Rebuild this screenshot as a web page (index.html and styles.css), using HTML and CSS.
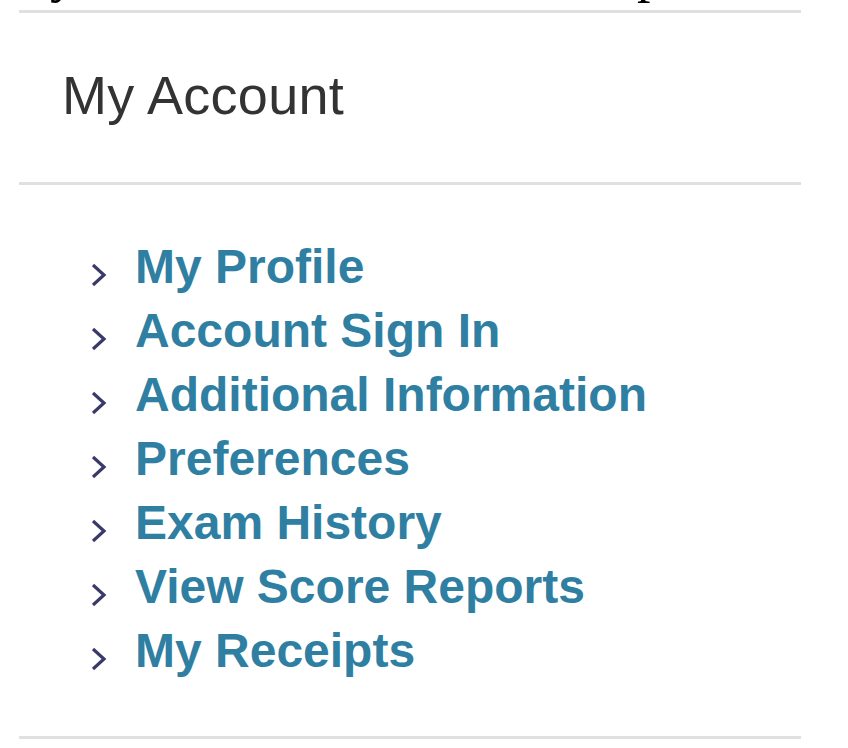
FILE: index.html
```html
<!DOCTYPE html>
<html>
<head>
<meta charset="utf-8">
<link rel="stylesheet" href="styles.css">
</head>
<body>
<div class="cut"><div class="cut-line"><span class="w1">y</span><span class="w2">p</span></div></div>
<section class="account">
  <h2 class="account-title">My Account</h2>
  <ul class="account-menu">
    <li class="menu-item"><svg class="chev" viewBox="0 0 16 26" width="16" height="26"><path d="M2 3 L13 13 L2 23" fill="none" stroke="#3a3a68" stroke-width="3.2"/></svg><a href="#">My Profile</a></li>
    <li class="menu-item"><svg class="chev" viewBox="0 0 16 26" width="16" height="26"><path d="M2 3 L13 13 L2 23" fill="none" stroke="#3a3a68" stroke-width="3.2"/></svg><a href="#">Account Sign In</a></li>
    <li class="menu-item"><svg class="chev" viewBox="0 0 16 26" width="16" height="26"><path d="M2 3 L13 13 L2 23" fill="none" stroke="#3a3a68" stroke-width="3.2"/></svg><a href="#">Additional Information</a></li>
    <li class="menu-item"><svg class="chev" viewBox="0 0 16 26" width="16" height="26"><path d="M2 3 L13 13 L2 23" fill="none" stroke="#3a3a68" stroke-width="3.2"/></svg><a href="#">Preferences</a></li>
    <li class="menu-item"><svg class="chev" viewBox="0 0 16 26" width="16" height="26"><path d="M2 3 L13 13 L2 23" fill="none" stroke="#3a3a68" stroke-width="3.2"/></svg><a href="#">Exam History</a></li>
    <li class="menu-item"><svg class="chev" viewBox="0 0 16 26" width="16" height="26"><path d="M2 3 L13 13 L2 23" fill="none" stroke="#3a3a68" stroke-width="3.2"/></svg><a href="#">View Score Reports</a></li>
    <li class="menu-item"><svg class="chev" viewBox="0 0 16 26" width="16" height="26"><path d="M2 3 L13 13 L2 23" fill="none" stroke="#3a3a68" stroke-width="3.2"/></svg><a href="#">My Receipts</a></li>
  </ul>
</section>
</body>
</html>
```
FILE: styles.css
```css
html, body {
  margin: 0;
  padding: 0;
  background: #fff;
}
body {
  width: 848px;
  height: 748px;
  overflow: hidden;
}
.cut {
  height: 10px;
  overflow: hidden;
}
.cut-line {
  display: flex;
  margin-top: -62px;
  height: 70px;
  font-family: "Liberation Serif", serif;
  font-size: 54px;
  line-height: 70px;
  color: #000;
}
.cut-line .w1 {
  margin-left: 50px;
}
.cut-line .w2 {
  margin-left: 560px;
}
.account {
  margin-left: 19px;
  width: 782px;
  border-top: 3px solid #e0e0e0;
  font-family: "Liberation Sans", Arial, sans-serif;
}
.account-title {
  margin: 0;
  padding: 51px 0 56px 43px;
  font-size: 54px;
  line-height: 62px;
  font-weight: normal;
  letter-spacing: 0.3px;
  color: #333;
  border-bottom: 3px solid #e0e0e0;
}
.account-menu {
  list-style: none;
  margin: 0;
  padding: 50px 0 53px 72px;
  border-bottom: 3px solid #e0e0e0;
}
.menu-item {
  display: flex;
  align-items: flex-start;
  height: 64px;
}
.chev {
  flex: none;
  margin-top: 27px;
  margin-right: 28px;
}
.menu-item a {
  font-size: 48px;
  line-height: 64px;
  font-weight: bold;
  letter-spacing: 0;
  color: #2f7fa3;
  text-decoration: none;
}
```
